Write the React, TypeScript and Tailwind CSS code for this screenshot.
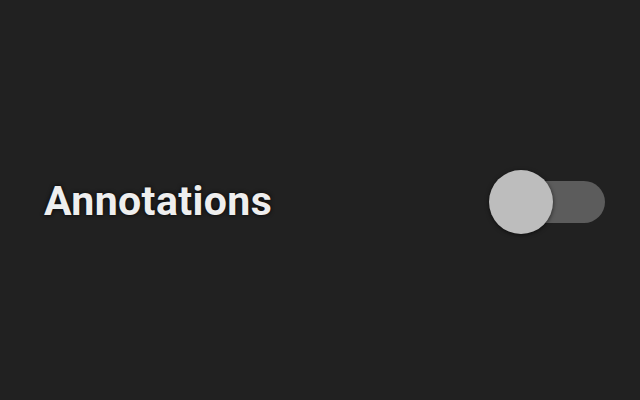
export default function App() {
  return (
    <div className="flex h-[400px] w-[640px] items-center bg-[#212121] font-['Roboto',sans-serif]">
      <div className="flex w-full items-center justify-between pl-[44px] pr-[35px] pt-[4px]">
        <span className="text-[41px] font-bold tracking-[0.4px] text-[#eeeeee] [text-shadow:0_0_4px_rgba(0,0,0,0.9)]">
          Annotations
        </span>
        <div className="relative h-[64px] w-[116px]">
          <div className="absolute left-[30px] top-[11px] h-[42px] w-[86px] rounded-full bg-[#5c5c5c]" />
          <div className="absolute left-0 top-0 h-[64px] w-[64px] rounded-full bg-[#bdbdbd] shadow-[0_1px_4px_rgba(0,0,0,0.6)]" />
        </div>
      </div>
    </div>
  );
}
